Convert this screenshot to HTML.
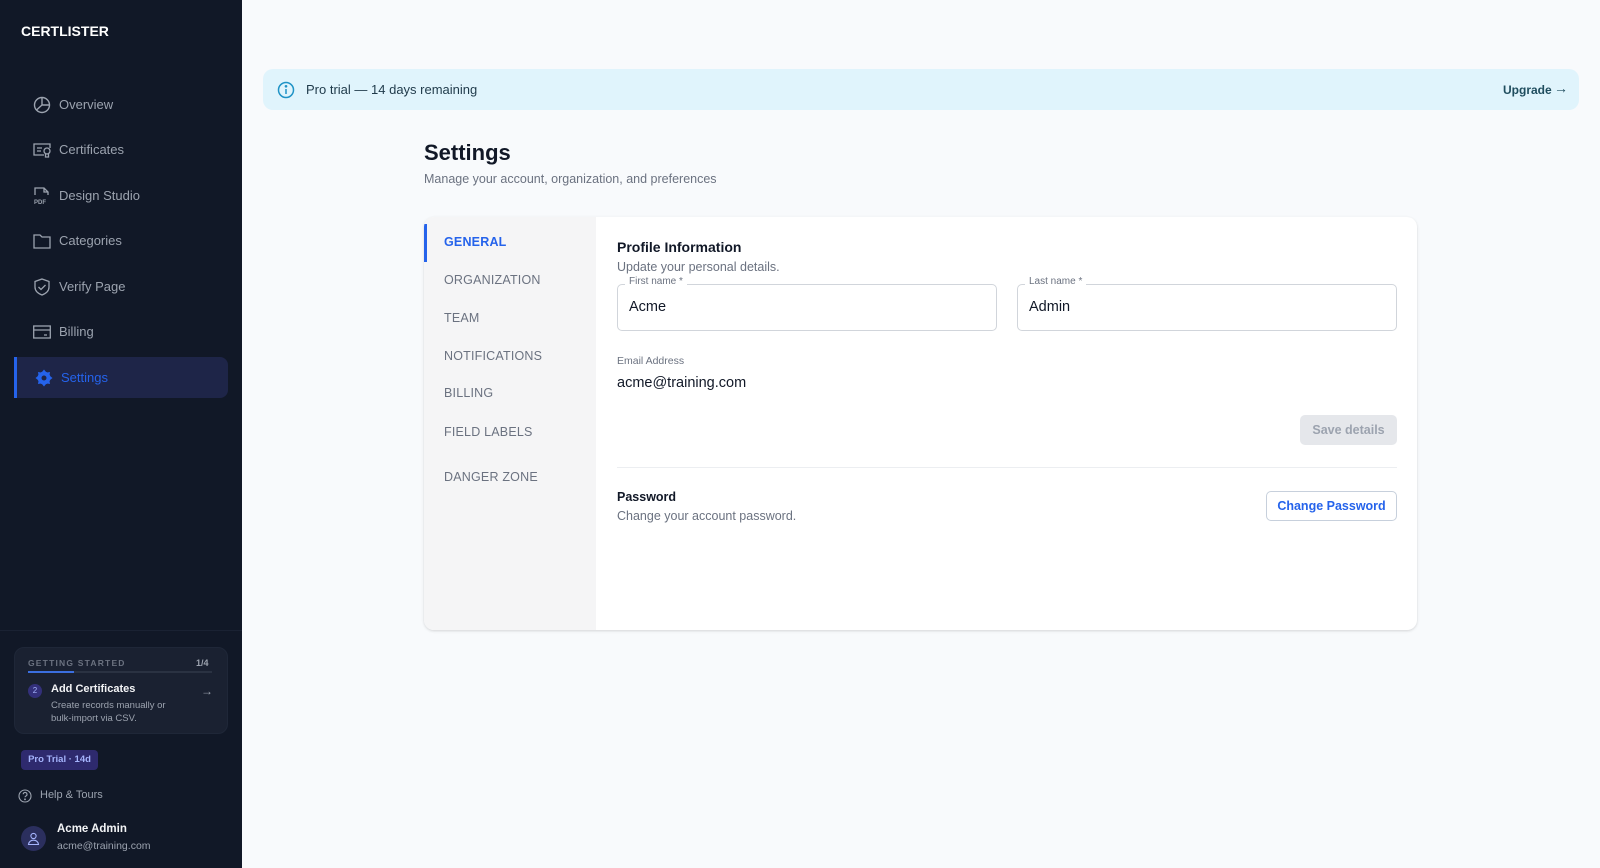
<!DOCTYPE html>
<html><head><meta charset="utf-8"><style>
*{box-sizing:border-box;margin:0;padding:0}
body{width:1600px;height:868px;overflow:hidden;font-family:"Liberation Sans",sans-serif;background:#f8fafc;position:relative;color:#111827}
.a{position:absolute;white-space:nowrap}
.sb{position:absolute;left:0;top:0;width:242px;height:868px;background:#111827}
.nav{position:absolute;left:33px;width:190px;color:#9ca3af;font-size:13px;height:20px;line-height:20px;white-space:nowrap}
.nav svg{position:absolute;left:0;top:1px}
.nav span{position:absolute;left:26px;white-space:nowrap}
.tab{position:absolute;left:444px;font-size:12.5px;color:#6b7280;letter-spacing:.2px}
</style></head><body>
<div class="sb">
 <div class="a" style="left:21px;top:23px;color:#fff;font-weight:bold;font-size:14px">CERTLISTER</div>
 <div class="nav" style="top:95px"><svg width="18" height="18" viewBox="0 0 18 18" fill="none" stroke="#9ca3af" stroke-width="1.4"><circle cx="9" cy="9" r="7.5"/><path d="M9 1.5V9l-5.5 5M9 9h7.5"/></svg><span>Overview</span></div>
 <div class="nav" style="top:140px"><svg width="19" height="18" viewBox="0 0 19 18" fill="none" stroke="#9ca3af" stroke-width="1.3"><path d="M11 14H1V3h16v4"/><path d="M4 7h5M4 10h4"/><circle cx="14" cy="10" r="3"/><path d="M12.5 13v3h3v-3"/></svg><span>Certificates</span></div>
 <div class="nav" style="top:186px"><svg width="18" height="18" viewBox="0 0 18 18" fill="none" stroke="#9ca3af" stroke-width="1.3"><path d="M2 8V1h9l4 4v3M11 1v4h4"/><text x="1" y="17" font-size="6" fill="#9ca3af" stroke="none" font-family="Liberation Sans" font-weight="bold">PDF</text></svg><span>Design Studio</span></div>
 <div class="nav" style="top:231px"><svg width="18" height="18" viewBox="0 0 18 18" fill="none" stroke="#9ca3af" stroke-width="1.3"><path d="M1 3h6l2 2h8v11H1z"/></svg><span>Categories</span></div>
 <div class="nav" style="top:277px"><svg width="18" height="18" viewBox="0 0 18 18" fill="none" stroke="#9ca3af" stroke-width="1.3"><path d="M9 1l7 2.5V9c0 4-3 6.5-7 8-4-1.5-7-4-7-8V3.5z"/><path d="M5.5 9l2.5 2.5 4.5-4.5"/></svg><span>Verify Page</span></div>
 <div class="nav" style="top:322px"><svg width="18" height="18" viewBox="0 0 18 18" fill="none" stroke="#9ca3af" stroke-width="1.3"><rect x="0.7" y="3" width="16.6" height="12"/><path d="M1 7h16M11 12h3"/></svg><span>Billing</span></div>
 <div class="a" style="left:14px;top:357px;width:214px;height:41px;background:#1e2548;border-left:3px solid #2563eb;border-radius:0 8px 8px 0"></div>
 <div class="nav" style="top:368px;color:#2563eb;left:35px"><svg width="18" height="18" viewBox="0 0 18 18"><circle cx="9" cy="9" r="6.5" fill="#2563eb"/><path d="M9 0.5l2 2.5h-4zM9 17.5l2-2.5h-4zM0.5 9l2.5 2v-4zM17.5 9l-2.5 2v-4zM3 3l3 .5-2.5 2.5zM15 15l-3-.5 2.5-2.5zM15 3l-.5 3-2.5-2.5zM3 15l.5-3 2.5 2.5z" fill="#2563eb"/><circle cx="9" cy="9" r="2.5" fill="#1e2548"/></svg><span>Settings</span></div>
 <div class="a" style="left:0;top:630px;width:242px;height:1px;background:#1a2233"></div>
 <div class="a" style="left:14px;top:647px;width:214px;height:87px;background:#1a2131;border:1px solid #1f2738;border-radius:10px"></div>
 <div class="a" style="left:28px;top:658px;font-size:8.5px;letter-spacing:1.2px;color:#6b7280;font-weight:bold">GETTING STARTED</div>
 <div class="a" style="left:196px;top:658px;font-size:9px;color:#9ca3af;font-weight:bold">1/4</div>
 <div class="a" style="left:28px;top:671px;width:184px;height:2px;background:#2a3242"></div>
 <div class="a" style="left:28px;top:671px;width:46px;height:2px;background:#3b6fe0"></div>
 <div class="a" style="left:28px;top:684px;width:14px;height:14px;border-radius:7px;background:#33307a;color:#a5b4fc;font-size:8px;text-align:center;line-height:14px">2</div>
 <div class="a" style="left:51px;top:683px;font-size:11px;color:#f3f4f6;font-weight:bold">Add Certificates</div>
 <div class="a" style="left:51px;top:699px;font-size:9.5px;color:#9ca3af;line-height:13px">Create records manually or<br>bulk-import via CSV.</div>
 <div class="a" style="left:201px;top:684px;font-size:12px;color:#9ca3af">→</div>
 <div class="a" style="left:21px;top:750px;width:77px;height:20px;background:#2e2a6e;border-radius:4px;color:#a5b4fc;font-size:9.5px;font-weight:bold;line-height:20px;text-align:center">Pro Trial · 14d</div>
 <svg class="a" style="left:18px;top:789px" width="14" height="14" viewBox="0 0 14 14" fill="none" stroke="#9ca3af" stroke-width="1.1"><circle cx="7" cy="7" r="6"/><path d="M5.2 5.3a1.9 1.9 0 1 1 2.6 1.8c-.5.3-.8.6-.8 1.2"/><circle cx="7" cy="10.3" r=".4" fill="#9ca3af"/></svg>
 <div class="a" style="left:40px;top:789px;font-size:11px;color:#9ca3af">Help &amp; Tours</div>
 <div class="a" style="left:21px;top:826px;width:25px;height:25px;border-radius:13px;background:#2b2f5e"></div>
 <svg class="a" style="left:27px;top:832px" width="13" height="13" viewBox="0 0 13 13" fill="none" stroke="#a5b4fc" stroke-width="1.1"><circle cx="6.5" cy="4" r="2.6"/><path d="M1.5 12.5c.5-3 2.5-4.3 5-4.3s4.5 1.3 5 4.3z"/></svg>
 <div class="a" style="left:57px;top:823px;font-size:11.5px;color:#f3f4f6;font-weight:bold">Acme Admin</div>
 <div class="a" style="left:57px;top:840px;font-size:10.5px;color:#9ca3af">acme@training.com</div>
</div>

<div class="a" style="left:263px;top:69px;width:1316px;height:41px;background:#e0f4fc;border-radius:10px"></div>
<svg class="a" style="left:277px;top:81px" width="18" height="18" viewBox="0 0 18 18" fill="none" stroke="#1f93c6" stroke-width="1.5"><circle cx="9" cy="9" r="7.5"/><path d="M9 8v5"/><circle cx="9" cy="5.3" r=".6" fill="#1f93c6"/></svg>
<div class="a" style="left:306px;top:82px;font-size:13px;color:#1f3a4a">Pro trial — 14 days remaining</div>
<div class="a" style="left:1503px;top:83px;font-size:12px;font-weight:bold;color:#1f4d5e">Upgrade</div>
<div class="a" style="left:1554px;top:80px;font-size:14px;color:#1f4d5e">→</div>

<div class="a" style="left:424px;top:140px;font-size:22px;font-weight:bold;color:#111827">Settings</div>
<div class="a" style="left:424px;top:172px;font-size:12.5px;color:#6b7280">Manage your account, organization, and preferences</div>

<div class="a" style="left:424px;top:217px;width:993px;height:413px;background:#fff;border-radius:10px;box-shadow:0 1px 3px rgba(0,0,0,.1),0 1px 2px rgba(0,0,0,.05);overflow:hidden">
 <div style="position:absolute;left:0;top:0;width:172px;height:413px;background:#f5f5f6"></div>
 <div style="position:absolute;left:0;top:7px;width:3px;height:38px;background:#2563eb"></div>
</div>
<div class="tab" style="top:235px;color:#2563eb;font-weight:bold">GENERAL</div>
<div class="tab" style="top:273px">ORGANIZATION</div>
<div class="tab" style="top:311px">TEAM</div>
<div class="tab" style="top:349px">NOTIFICATIONS</div>
<div class="tab" style="top:386px">BILLING</div>
<div class="tab" style="top:425px">FIELD LABELS</div>
<div class="tab" style="top:470px">DANGER ZONE</div>

<div class="a" style="left:617px;top:239px;font-size:14px;font-weight:bold;color:#111827">Profile Information</div>
<div class="a" style="left:617px;top:260px;font-size:12.5px;color:#6b7280">Update your personal details.</div>
<div class="a" style="left:617px;top:284px;width:380px;height:47px;border:1px solid #d1d5db;border-radius:5px"></div>
<div class="a" style="left:625px;top:276px;font-size:10px;color:#6b7280;background:#fff;padding:0 4px">First name *</div>
<div class="a" style="left:629px;top:299px;font-size:14.5px;color:#111827">Acme</div>
<div class="a" style="left:1017px;top:284px;width:380px;height:47px;border:1px solid #d1d5db;border-radius:5px"></div>
<div class="a" style="left:1025px;top:276px;font-size:10px;color:#6b7280;background:#fff;padding:0 4px">Last name *</div>
<div class="a" style="left:1029px;top:299px;font-size:14.5px;color:#111827">Admin</div>
<div class="a" style="left:617px;top:355px;font-size:10.5px;color:#6b7280">Email Address</div>
<div class="a" style="left:617px;top:375px;font-size:14.5px;color:#111827">acme@training.com</div>
<div class="a" style="left:1300px;top:415px;width:97px;height:30px;background:#e5e7eb;border-radius:5px;color:#9ca3af;font-size:12.5px;text-align:center;line-height:30px;font-weight:bold">Save details</div>
<div class="a" style="left:617px;top:467px;width:780px;height:1px;background:#eceef1"></div>
<div class="a" style="left:617px;top:490px;font-size:12.5px;font-weight:bold;color:#111827">Password</div>
<div class="a" style="left:617px;top:509px;font-size:12.5px;color:#6b7280">Change your account password.</div>
<div class="a" style="left:1266px;top:491px;width:131px;height:30px;border:1px solid #c7d0dc;border-radius:5px;color:#2563eb;font-size:12.5px;text-align:center;line-height:28px;font-weight:bold">Change Password</div>
</body></html>
